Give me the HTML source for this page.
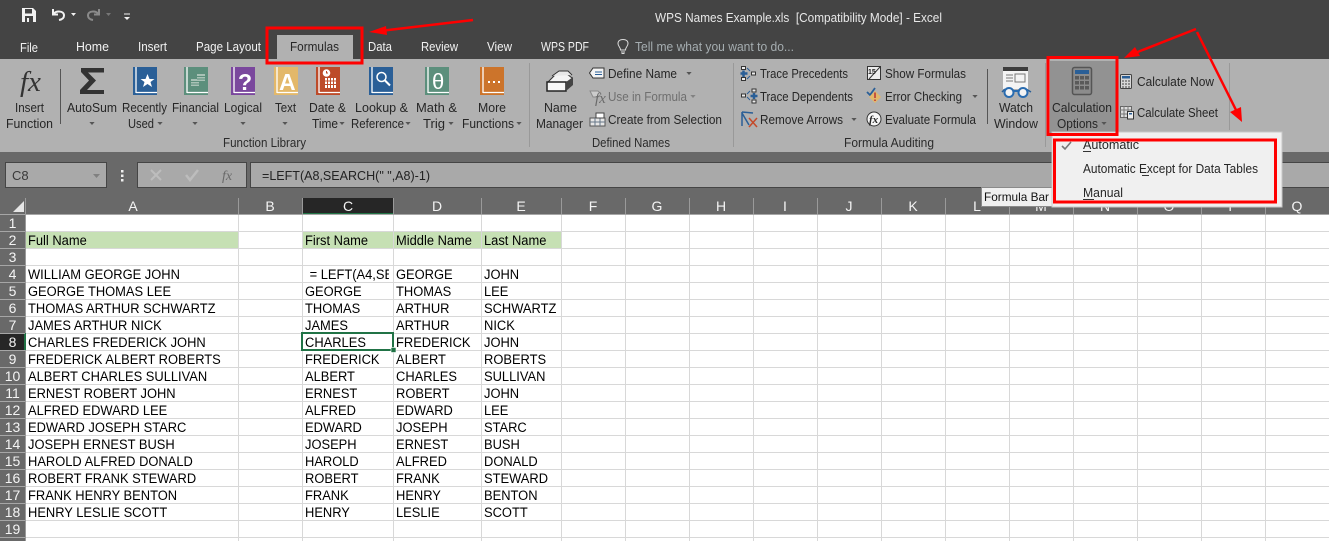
<!DOCTYPE html>
<html><head><meta charset="utf-8"><title>WPS Names Example</title>
<style>
html,body{margin:0;padding:0;width:1329px;height:541px;overflow:hidden;background:#fff}
svg{display:block}
text{font-family:"Liberation Sans",sans-serif;white-space:pre}
.t{font-size:13px;fill:#f2f2f2}
.r{font-size:13px;fill:#262626}
.g{font-size:13px;fill:#2b2b2b}
.d{font-size:13px;fill:#6f6f6f}
.c{font-size:14px;fill:#000}
.h{font-size:14px;fill:#f4f4f4;text-anchor:middle}
</style></head><body>
<svg width="1329" height="541" viewBox="0 0 1329 541" xmlns="http://www.w3.org/2000/svg">
<defs>
<clipPath id="cc"><rect x="0" y="0" width="91" height="541"/></clipPath>
<symbol id="bk" viewBox="0 0 24 28" width="24" height="28" overflow="visible"><rect width="24" height="28" fill="currentColor"/><path d="M3 0V26M3 25.500H24" stroke="#fff" stroke-width="1.300" fill="none"/><rect y="26.500" x="0" width="24" height="1.500" fill="currentColor"/></symbol>
<symbol id="ar" viewBox="0 0 7 4" width="6" height="3"><path d="M0 0H7L3.500 4Z" fill="#555"/></symbol>
</defs>

<!-- title and tabs -->
<rect width="1329" height="59" fill="#444"/>
<rect y="59" width="1329" height="93" fill="#b1b1b1"/>
<rect y="152" width="1329" height="46" fill="#696969"/>
<rect x="277" y="35" width="76" height="24" fill="#b1b1b1"/>

<path d="M22 8H33L36 11V22H22Z" fill="#f2f2f2"/><rect x="25" y="9" width="7" height="4.500" fill="#444"/><rect x="25" y="16" width="8" height="6" fill="#444"/><rect x="27" y="18" width="2" height="4" fill="#f2f2f2"/>
<path d="M53 9V14.500H58M53.500 14C56 10.500 64 10.500 64 15.500C64 18 62 19.500 59 20" fill="none" stroke="#f2f2f2" stroke-width="2"/>
<path d="M71 13H76L73.500 16Z" fill="#f2f2f2"/>
<path d="M99 9V14.500H94M98.500 14C96 10.500 88 10.500 88 15.500C88 18 90 19.500 93 20" fill="none" stroke="#8a8a8a" stroke-width="2"/>
<path d="M106 13H111L108.500 16Z" fill="#777"/>
<path d="M124 14H130" stroke="#f2f2f2"/><path d="M124 17H130L127 20Z" fill="#f2f2f2"/>

<text class="t" x="655" y="22" textLength="287" lengthAdjust="spacingAndGlyphs" style="font-size:12.500px;fill:#e8e8e8">WPS Names Example.xls  [Compatibility Mode] - Excel</text>
<text class="t" x="20" y="52" textLength="18" lengthAdjust="spacingAndGlyphs">File</text>
<text class="t" x="76" y="51" textLength="33" lengthAdjust="spacingAndGlyphs">Home</text>
<text class="t" x="138" y="51" textLength="29" lengthAdjust="spacingAndGlyphs">Insert</text>
<text class="t" x="196" y="51" textLength="65" lengthAdjust="spacingAndGlyphs">Page Layout</text>
<text class="r" x="290" y="51" textLength="49" lengthAdjust="spacingAndGlyphs">Formulas</text>
<text class="t" x="368" y="51" textLength="24" lengthAdjust="spacingAndGlyphs">Data</text>
<text class="t" x="421" y="51" textLength="37" lengthAdjust="spacingAndGlyphs">Review</text>
<text class="t" x="487" y="51" textLength="25" lengthAdjust="spacingAndGlyphs">View</text>
<text class="t" x="541" y="51" textLength="48" lengthAdjust="spacingAndGlyphs">WPS PDF</text>
<path d="M620.500 50C620.500 47 618 46.500 618 43.500C618 41 620 39.500 623 39.500C626 39.500 628 41 628 43.500C628 46.500 625.500 47 625.500 50ZM621 52H625M621.500 53.500H624.500" fill="none" stroke="#ddd"/>
<text class="t" x="635" y="51" textLength="159" lengthAdjust="spacingAndGlyphs" style="fill:#a5adb0">Tell me what you want to do...</text>

<!-- ribbon separators -->
<path d="M60.500 69V124M987.500 69V124" stroke="#555"/>
<path d="M529.500 63V147M733.500 63V147M1045.500 63V147M1229.500 63V130" stroke="#999"/>

<!-- function library -->
<text x="20" y="91" style="font-family:'Liberation Serif',serif;font-style:italic;font-size:29px;fill:#333">fx</text>
<path d="M81 68H104V72.500H88L96 80.500 87 90H104V94H80V90L89 80.500 81 72Z" fill="#333"/>
<use href="#bk" x="133" y="67" style="color:#2a5f97"/>
<path d="M147.500 74L149.500 79H154.500L150.500 82L152 87L147.500 84L143 87L144.500 82L140.500 79H145.500Z" fill="#fff"/>
<use href="#bk" x="184" y="67" style="color:#5c8f7c"/>
<path d="M197 74h8v7h-8zM191 79h8v7h-8z" fill="#a9c2b6"/><path d="M197 76.500h8M197 79h8M191 81.500h8M191 84h8" stroke="#5c8f7c"/>
<use href="#bk" x="231" y="67" style="color:#7a479d"/>
<text x="238" y="90" style="font-size:23px;font-weight:bold;fill:#fff">?</text>
<use href="#bk" x="274" y="67" style="color:#e3b86a"/>
<text x="279" y="90" style="font-size:23px;font-weight:bold;fill:#fff">A</text>
<use href="#bk" x="316" y="67" style="color:#bd4b2a"/>
<circle cx="326.500" cy="73" r="3.800" fill="#fff"/><path d="M326.500 71V73H328" stroke="#bd4b2a" fill="none"/>
<path d="M325 78h11v10h-11z" fill="#fff"/><path d="M327.500 78v10M330.500 78v10M333.500 78v10M325 81h11M325 84.500h11" stroke="#bd4b2a" fill="none"/>
<use href="#bk" x="369" y="67" style="color:#2a5f97"/>
<circle cx="381.500" cy="77" r="4.500" fill="none" stroke="#fff" stroke-width="1.500"/><path d="M385 80.500L390 85.500" stroke="#fff" stroke-width="2"/>
<use href="#bk" x="425" y="67" style="color:#5c8f7c"/>
<text x="432" y="89" style="font-size:22px;fill:#fff">θ</text>
<use href="#bk" x="480" y="67" style="color:#cc742b"/>
<path d="M488 81h2v2h-2zM493 81h2v2h-2zM498 81h2v2h-2z" fill="#fff"/>

<g class="ribbon">
<text class="r" x="15" y="112" textLength="29" lengthAdjust="spacingAndGlyphs">Insert</text>
<text class="r" x="6" y="128" textLength="47" lengthAdjust="spacingAndGlyphs">Function</text>
<text class="r" x="67" y="112" textLength="50" lengthAdjust="spacingAndGlyphs">AutoSum</text>
<text class="r" x="122" y="112" textLength="45" lengthAdjust="spacingAndGlyphs">Recently</text>
<text class="r" x="128" y="128" textLength="26" lengthAdjust="spacingAndGlyphs">Used</text>
<text class="r" x="172" y="112" textLength="47" lengthAdjust="spacingAndGlyphs">Financial</text>
<text class="r" x="224" y="112" textLength="38" lengthAdjust="spacingAndGlyphs">Logical</text>
<text class="r" x="275" y="112" textLength="21" lengthAdjust="spacingAndGlyphs">Text</text>
<text class="r" x="309" y="112" textLength="37" lengthAdjust="spacingAndGlyphs">Date &amp;</text>
<text class="r" x="312" y="128" textLength="26" lengthAdjust="spacingAndGlyphs">Time</text>
<text class="r" x="355" y="112" textLength="53" lengthAdjust="spacingAndGlyphs">Lookup &amp;</text>
<text class="r" x="351" y="128" textLength="53" lengthAdjust="spacingAndGlyphs">Reference</text>
<text class="r" x="416" y="112" textLength="41" lengthAdjust="spacingAndGlyphs">Math &amp;</text>
<text class="r" x="423" y="128" textLength="22" lengthAdjust="spacingAndGlyphs">Trig</text>
<text class="r" x="478" y="112" textLength="28" lengthAdjust="spacingAndGlyphs">More</text>
<text class="r" x="462" y="128" textLength="52" lengthAdjust="spacingAndGlyphs">Functions</text>
<text class="g" x="223" y="147" textLength="83" lengthAdjust="spacingAndGlyphs">Function Library</text>
</g>
<use href="#ar" x="89" y="122"/><use href="#ar" x="157" y="122"/><use href="#ar" x="192" y="122"/><use href="#ar" x="240" y="122"/><use href="#ar" x="282" y="122"/><use href="#ar" x="339" y="122"/><use href="#ar" x="405" y="122"/><use href="#ar" x="448" y="122"/><use href="#ar" x="516" y="122"/>

<!-- defined names -->
<path d="M548 82L556 74H567L572 78V84L566 82Z" fill="#f4f4f4" stroke="#333"/><path d="M552 76L559 71H568L572 75" stroke="#333" fill="#e8e8e8"/>
<rect x="547" y="82" width="19" height="9" fill="#f8f8f8" stroke="#222" stroke-width="1.500"/><path d="M566 82L573 77V85L566 91Z" fill="#444"/>
<text class="r" x="544" y="112" textLength="33" lengthAdjust="spacingAndGlyphs">Name</text>
<text class="r" x="536" y="128" textLength="47" lengthAdjust="spacingAndGlyphs">Manager</text>
<path d="M593 68H604V78H593L589.500 73Z" fill="#f4f4f4" stroke="#333"/><path d="M595 72H602M595 74.500H602" stroke="#2a5f97"/>
<path d="M590 91H598L601 94L598 97H593Z" fill="#ccc" stroke="#8a8a8a"/>
<text x="595" y="103" style="font-family:'Liberation Serif',serif;font-style:italic;font-size:15px;fill:#6a6a6a">fx</text>
<rect x="590" y="118" width="15" height="8" fill="#e6e6e6" stroke="#555"/><path d="M595 118V126M600 118V126M590 122H605" stroke="#678"/><path d="M596 113H604V118H596Z" fill="#fff" stroke="#444"/>
<text class="r" x="608" y="78" textLength="69" lengthAdjust="spacingAndGlyphs">Define Name</text>
<text class="d" x="608" y="101" textLength="79" lengthAdjust="spacingAndGlyphs">Use in Formula</text>
<text class="r" x="608" y="124" textLength="114" lengthAdjust="spacingAndGlyphs">Create from Selection</text>
<use href="#ar" x="686" y="72"/><use href="#ar" x="690" y="95" opacity=".5"/>
<text class="g" x="592" y="147" textLength="78" lengthAdjust="spacingAndGlyphs">Defined Names</text>

<!-- formula auditing -->
<path d="M741.500 66.500h4v3h-4zM741.500 77.500h4v3h-4zM751.500 72h4v3h-4z" fill="#eee" stroke="#333"/>
<path d="M743.500 70.500V77M740.500 73.500H747.500" stroke="#2a5f97" stroke-width="2.500"/><path d="M747 68L750 71M747 79L750 76" stroke="#2a5f97"/>
<path d="M741.500 94h4v3h-4zM752 89h4v3h-4zM752 100h4v3h-4z" fill="#eee" stroke="#333"/>
<path d="M754 93V99M750.500 96H757.500" stroke="#2a5f97" stroke-width="2.500"/><path d="M747 94L750 91M747 97L750 100" stroke="#2a5f97"/>
<path d="M742 112V126M742 112L753 113M742 113L749 125" stroke="#2a5f97" stroke-width="1.500" fill="none"/>
<path d="M749 118L757 127M757 118L749 127" stroke="#c44a2a" stroke-width="1.500"/>
<text class="r" x="760" y="78" textLength="88" lengthAdjust="spacingAndGlyphs">Trace Precedents</text>
<text class="r" x="760" y="101" textLength="93" lengthAdjust="spacingAndGlyphs">Trace Dependents</text>
<text class="r" x="760" y="124" textLength="83" lengthAdjust="spacingAndGlyphs">Remove Arrows</text>
<use href="#ar" x="851" y="118"/>
<rect x="867.500" y="66.500" width="13" height="13" fill="#eee" stroke="#333"/><path d="M869 79L880 67" stroke="#333"/>
<text x="868" y="74" style="font-size:7px;font-weight:bold;fill:#222">15</text>
<path d="M867 92L870 95L875 88" fill="none" stroke="#2a5f97" stroke-width="1.800"/>
<path d="M875 91L881 97L875 103L869 97Z" fill="#e3b86a"/><path d="M875 92.500V98M875 99.500V101" stroke="#b33" stroke-width="1.500"/>
<circle cx="874" cy="119" r="7" fill="#f6f6f6" stroke="#333"/>
<text x="869" y="123" style="font-family:'Liberation Serif',serif;font-style:italic;font-weight:bold;font-size:11px;fill:#222">fx</text>
<text class="r" x="885" y="78" textLength="81" lengthAdjust="spacingAndGlyphs">Show Formulas</text>
<text class="r" x="885" y="101" textLength="77" lengthAdjust="spacingAndGlyphs">Error Checking</text>
<text class="r" x="885" y="124" textLength="91" lengthAdjust="spacingAndGlyphs">Evaluate Formula</text>
<use href="#ar" x="972" y="95"/>
<text class="g" x="844" y="147" textLength="90" lengthAdjust="spacingAndGlyphs">Formula Auditing</text>

<!-- watch window -->
<rect x="1003" y="67" width="25" height="22" fill="#f4f4f4"/><rect x="1003" y="67" width="25" height="4" fill="#3c3c3c"/>
<rect x="1015" y="74" width="10" height="8" fill="none" stroke="#777"/><path d="M1006 75H1013M1006 78H1013M1006 81H1013" stroke="#777"/>
<path d="M1005 89L1002 92M1026 89L1031 92" stroke="#2a5f97" stroke-width="1.500"/>
<circle cx="1009" cy="92.500" r="4.500" fill="#f4f4f4" stroke="#2a6cb0" stroke-width="2"/><circle cx="1023" cy="92.500" r="4.500" fill="#f4f4f4" stroke="#2a6cb0" stroke-width="2"/><path d="M1013.500 91H1018.500" stroke="#2a6cb0" stroke-width="2"/>
<text class="r" x="999" y="112" textLength="34" lengthAdjust="spacingAndGlyphs">Watch</text>
<text class="r" x="994" y="128" textLength="44" lengthAdjust="spacingAndGlyphs">Window</text>

<!-- calculation -->
<rect x="1050" y="61" width="67" height="72" fill="#929292"/>
<rect x="1072.500" y="67.500" width="19" height="27" rx="2" fill="#8c8c8c" stroke="#555" stroke-width="1.500"/>
<rect x="1075" y="70" width="14" height="4" fill="#2a5f97"/>
<path d="M1075 76h4v3.500h-4zM1080 76h4v3.500h-4zM1085 76h4v3.500h-4zM1075 81h4v3.500h-4zM1080 81h4v3.500h-4zM1085 81h4v3.500h-4zM1075 86h4v3.500h-4zM1080 86h4v3.500h-4zM1085 86h4v3.500h-4z" fill="#5a5a5a"/>
<text class="r" x="1052" y="112" textLength="60" lengthAdjust="spacingAndGlyphs">Calculation</text>
<text class="r" x="1057" y="128" textLength="41" lengthAdjust="spacingAndGlyphs">Options</text>
<use href="#ar" x="1101" y="122"/>
<rect x="1120.500" y="74.500" width="11" height="14" rx="1" fill="#d8d8d8" stroke="#444"/><rect x="1122" y="76" width="8" height="2.500" fill="#2a5f97"/><path d="M1122 81h8M1122 84h8M1122 87h8" stroke="#444" stroke-dasharray="2 1"/>
<rect x="1120.500" y="106.500" width="11" height="11" fill="#ddd" stroke="#666"/><path d="M1124 106V117M1128 106V117M1120 110H1131M1120 114H1131" stroke="#777"/><rect x="1127.500" y="111.500" width="6" height="7.500" fill="#eee" stroke="#333"/><rect x="1129" y="113" width="3" height="1.500" fill="#2a5f97"/>
<text class="r" x="1137" y="86" textLength="77" lengthAdjust="spacingAndGlyphs">Calculate Now</text>
<text class="r" x="1137" y="117" textLength="81" lengthAdjust="spacingAndGlyphs">Calculate Sheet</text>

<!-- formula bar -->
<rect x="5.500" y="162.500" width="101" height="25" fill="#a9a9a9" stroke="#454545"/>
<text x="12" y="180" style="font-size:13px;fill:#3a3a3a">C8</text>
<path d="M93 174H100L96.500 178Z" fill="#808080"/>
<path d="M121 170h2.500v2.500h-2.500zM121 174.500h2.500v2.500h-2.500zM121 179h2.500v2.500h-2.500z" fill="#f0f0f0"/>
<rect x="137.500" y="162.500" width="109" height="25" fill="#a9a9a9" stroke="#454545"/>
<path d="M151 170L161 180M161 170L151 180" stroke="#bdbdbd" stroke-width="2"/>
<path d="M186 175L190 180L198 170" fill="none" stroke="#bdbdbd" stroke-width="2.500"/>
<text x="222" y="180" style="font-family:'Liberation Serif',serif;font-style:italic;font-size:14px;fill:#6a6a6a">fx</text>
<rect x="250.500" y="162.500" width="1090" height="25" fill="#a9a9a9" stroke="#454545"/>
<text x="262" y="180" textLength="168" lengthAdjust="spacingAndGlyphs" style="font-size:13px;fill:#222">=LEFT(A8,SEARCH(" ",A8)-1)</text>

<!-- grid -->
<rect y="214" width="1329" height="327" fill="#fff"/>
<rect x="26" y="232" width="212" height="16" fill="#c6e0b4"/>
<rect x="303" y="232" width="258" height="16" fill="#c6e0b4"/>
<path d="M26 231.500H1329M26 248.500H1329M26 265.500H1329M26 282.500H1329M26 299.500H1329M26 316.500H1329M26 333.500H1329M26 350.500H1329M26 367.500H1329M26 384.500H1329M26 401.500H1329M26 418.500H1329M26 435.500H1329M26 452.500H1329M26 469.500H1329M26 486.500H1329M26 503.500H1329M26 520.500H1329M26 537.500H1329" stroke="#d8d8d8"/>
<path d="M238.500 214V541M302.500 214V541M393.500 214V541M481.500 214V541M561.500 214V541M625.500 214V541M689.500 214V541M753.500 214V541M817.500 214V541M881.500 214V541M945.500 214V541M1009.500 214V541M1073.500 214V541M1137.500 214V541M1201.500 214V541M1265.500 214V541" stroke="#d8d8d8"/>

<!-- headers -->
<rect y="198" width="1329" height="16" fill="#696969"/>
<rect x="303" y="198" width="90" height="15" fill="#262626"/>
<rect x="302" y="213" width="92" height="1.500" fill="#217346"/>
<path d="M25.500 198V214M238.500 198V214M302.500 198V214M393.500 198V214M481.500 198V214M561.500 198V214M625.500 198V214M689.500 198V214M753.500 198V214M817.500 198V214M881.500 198V214M945.500 198V214M1009.500 198V214M1073.500 198V214M1137.500 198V214M1201.500 198V214M1265.500 198V214" stroke="#9a9a9a"/>
<path d="M0 214.500H1329" stroke="#a6a6a6"/>
<path d="M24 201V212H13Z" fill="#e6e6e6"/>
<text class="h" x="133" y="211">A</text><text class="h" x="270" y="211">B</text><text class="h" x="348" y="211">C</text><text class="h" x="437" y="211">D</text><text class="h" x="521" y="211">E</text><text class="h" x="593" y="211">F</text><text class="h" x="657" y="211">G</text><text class="h" x="721" y="211">H</text><text class="h" x="785" y="211">I</text><text class="h" x="849" y="211">J</text><text class="h" x="913" y="211">K</text><text class="h" x="977" y="211">L</text><text class="h" x="1041" y="211">M</text><text class="h" x="1105" y="211">N</text><text class="h" x="1169" y="211">O</text><text class="h" x="1233" y="211">P</text><text class="h" x="1297" y="211">Q</text>

<rect y="215" width="25.500" height="326" fill="#696969"/>
<rect y="334" width="24" height="16" fill="#262626"/>
<rect x="24" y="333" width="2" height="17" fill="#217346"/>
<path d="M0 231.500H25M0 248.500H25M0 265.500H25M0 282.500H25M0 299.500H25M0 316.500H25M0 333.500H25M0 350.500H25M0 367.500H25M0 384.500H25M0 401.500H25M0 418.500H25M0 435.500H25M0 452.500H25M0 469.500H25M0 486.500H25M0 503.500H25M0 520.500H25M0 537.500H25" stroke="#a6a6a6"/>
<path d="M25.500 214V333M25.500 350V541" stroke="#9a9a9a"/>
<text class="h" x="12.500" y="228">1</text><text class="h" x="12.500" y="245">2</text><text class="h" x="12.500" y="262">3</text><text class="h" x="12.500" y="279">4</text><text class="h" x="12.500" y="296">5</text><text class="h" x="12.500" y="313">6</text><text class="h" x="12.500" y="330">7</text><text class="h" x="12.500" y="347">8</text><text class="h" x="12.500" y="364">9</text><text class="h" x="12.500" y="381">10</text><text class="h" x="12.500" y="398">11</text><text class="h" x="12.500" y="415">12</text><text class="h" x="12.500" y="432">13</text><text class="h" x="12.500" y="449">14</text><text class="h" x="12.500" y="466">15</text><text class="h" x="12.500" y="483">16</text><text class="h" x="12.500" y="500">17</text><text class="h" x="12.500" y="517">18</text><text class="h" x="12.500" y="534">19</text>

<!-- cells -->
<g transform="translate(28 0) scale(.922 1)" class="col">
<text class="c" y="245">Full Name</text><text class="c" y="279">WILLIAM GEORGE JOHN</text><text class="c" y="296">GEORGE THOMAS LEE</text><text class="c" y="313">THOMAS ARTHUR SCHWARTZ</text><text class="c" y="330">JAMES ARTHUR NICK</text><text class="c" y="347">CHARLES FREDERICK JOHN</text><text class="c" y="364">FREDERICK ALBERT ROBERTS</text><text class="c" y="381">ALBERT CHARLES SULLIVAN</text><text class="c" y="398">ERNEST ROBERT JOHN</text><text class="c" y="415">ALFRED EDWARD LEE</text><text class="c" y="432">EDWARD JOSEPH STARC</text><text class="c" y="449">JOSEPH ERNEST BUSH</text><text class="c" y="466">HAROLD ALFRED DONALD</text><text class="c" y="483">ROBERT FRANK STEWARD</text><text class="c" y="500">FRANK HENRY BENTON</text><text class="c" y="517">HENRY LESLIE SCOTT</text>
</g>
<g transform="translate(305 0) scale(.922 1)">
<text class="c" y="245">First Name</text><text class="c" x="5" y="279" clip-path="url(#cc)">= LEFT(A4,SE</text><text class="c" y="296">GEORGE</text><text class="c" y="313">THOMAS</text><text class="c" y="330">JAMES</text><text class="c" y="347">CHARLES</text><text class="c" y="364">FREDERICK</text><text class="c" y="381">ALBERT</text><text class="c" y="398">ERNEST</text><text class="c" y="415">ALFRED</text><text class="c" y="432">EDWARD</text><text class="c" y="449">JOSEPH</text><text class="c" y="466">HAROLD</text><text class="c" y="483">ROBERT</text><text class="c" y="500">FRANK</text><text class="c" y="517">HENRY</text>
</g>
<g transform="translate(396 0) scale(.922 1)">
<text class="c" y="245">Middle Name</text><text class="c" y="279">GEORGE</text><text class="c" y="296">THOMAS</text><text class="c" y="313">ARTHUR</text><text class="c" y="330">ARTHUR</text><text class="c" y="347">FREDERICK</text><text class="c" y="364">ALBERT</text><text class="c" y="381">CHARLES</text><text class="c" y="398">ROBERT</text><text class="c" y="415">EDWARD</text><text class="c" y="432">JOSEPH</text><text class="c" y="449">ERNEST</text><text class="c" y="466">ALFRED</text><text class="c" y="483">FRANK</text><text class="c" y="500">HENRY</text><text class="c" y="517">LESLIE</text>
</g>
<g transform="translate(484 0) scale(.922 1)">
<text class="c" y="245">Last Name</text><text class="c" y="279">JOHN</text><text class="c" y="296">LEE</text><text class="c" y="313">SCHWARTZ</text><text class="c" y="330">NICK</text><text class="c" y="347">JOHN</text><text class="c" y="364">ROBERTS</text><text class="c" y="381">SULLIVAN</text><text class="c" y="398">JOHN</text><text class="c" y="415">LEE</text><text class="c" y="432">STARC</text><text class="c" y="449">BUSH</text><text class="c" y="466">DONALD</text><text class="c" y="483">STEWARD</text><text class="c" y="500">BENTON</text><text class="c" y="517">SCOTT</text>
</g>
<rect x="302" y="333" width="91" height="17" fill="none" stroke="#217346" stroke-width="2"/>
<rect x="391" y="347.500" width="5" height="5" fill="#217346" stroke="#fff" stroke-width=".6"/>

<!-- tooltip -->
<rect x="981.500" y="187.500" width="72" height="19" fill="#f0f0f0" stroke="#8a8a8a"/>
<text x="984" y="201" textLength="65" lengthAdjust="spacingAndGlyphs" style="font-size:12px;fill:#111">Formula Bar</text>

<!-- dropdown -->
<rect x="1052" y="132" width="230" height="75" fill="#f0f0f0" stroke="#c8c8c8"/>
<path d="M1062 146L1065 149L1071 142" fill="none" stroke="#777" stroke-width="1.600"/>
<text class="r" x="1083" y="149" textLength="56" lengthAdjust="spacingAndGlyphs" style="font-size:12.500px">Automatic</text>
<path d="M1083 151.500H1091" stroke="#333"/>
<text class="r" x="1083" y="173" textLength="175" lengthAdjust="spacingAndGlyphs" style="font-size:12.500px">Automatic Except for Data Tables</text>
<path d="M1142 175.500H1149" stroke="#333"/>
<text class="r" x="1083" y="197" textLength="40" lengthAdjust="spacingAndGlyphs" style="font-size:12.500px">Manual</text>
<path d="M1083 199.500H1094" stroke="#333"/>

<!-- red annotations -->
<g fill="none" stroke="#f00" stroke-width="3">
<rect x="267" y="28" width="95" height="35"/>
<rect x="1048" y="57.500" width="69" height="77"/>
<rect x="1054.500" y="140" width="221" height="62"/>
<path d="M473 20L380 31" stroke-width="2.500"/>
<path d="M1196 29L1135 53" stroke-width="2.500"/>
<path d="M1197 32L1237 112" stroke-width="2.500"/>
</g>
<path d="M369 32L386 26L387 35ZM1124 58L1135 47L1140 56ZM1242 122L1230 112L1241 107Z" fill="#f00"/>
</svg>
</body></html>
